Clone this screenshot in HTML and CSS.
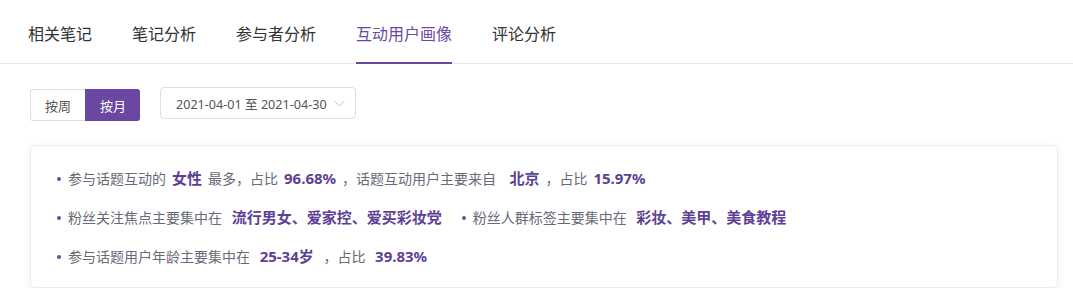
FILE: index.html
```html
<!DOCTYPE html>
<html lang="zh-CN">
<head>
  <meta charset="UTF-8">
  <title>互动用户画像</title>
  <link rel="stylesheet" href="styles.css">
</head>
<body>
<div class="tabs">
  <div class="tab">相关笔记</div>
  <div class="tab">笔记分析</div>
  <div class="tab">参与者分析</div>
  <div class="tab active">互动用户画像</div>
  <div class="tab">评论分析</div>
</div>

<div class="toolbar">
  <div class="btn-group">
    <button>按周</button>
    <button class="on">按月</button>
  </div>
  <div class="date-picker">
    <span>2021-04-01 至 2021-04-30</span>
    <svg width="11" height="7" viewBox="0 0 11 7"><path d="M0.5 0.8 L5.5 5.8 L10.5 0.8" fill="none" stroke="#c0c4cc" stroke-width="1"/></svg>
  </div>
</div>

<div class="card">
  <div class="row">
    <div class="item">参与话题互动的<span class="hl">女性</span>最多，占比<span class="hl">96.68%</span>，话题互动用户主要来自  <span class="hl">北京</span>，占比<span class="hl">15.97%</span></div>
  </div>
  <div class="row">
    <div class="item">粉丝关注焦点主要集中在 <span class="hl">流行男女、爱家控、爱买彩妆党</span></div>
    <div class="item">粉丝人群标签主要集中在 <span class="hl">彩妆、美甲、美食教程</span></div>
  </div>
  <div class="row">
    <div class="item">参与话题用户年龄主要集中在 <span class="hl">25-34岁</span> ，占比 <span class="hl">39.83%</span></div>
  </div>
</div>
</body>
</html>
```

FILE: styles.css
```css
body {
  margin: 0;
  font-family: "Noto Sans", "Noto Sans CJK SC", sans-serif;
  background: #fff;
  color: #333;
}
.tabs {
  display: flex;
  gap: 40px;
  padding-left: 28px;
  border-bottom: 1px solid #e8e8ee;
}
.tab {
  font-size: 16px;
  line-height: 24px;
  padding: 22px 0 16px;
  border-bottom: 2px solid transparent;
  margin-bottom: -1px;
  color: #333;
}
.tab.active {
  color: #6a4aa3;
  border-bottom-color: #6a47a2;
}
.toolbar {
  display: flex;
  align-items: flex-start;
  padding: 23px 0 0 30px;
}
.btn-group {
  display: flex;
  margin-top: 2px;
}
.btn-group button {
  width: 55px;
  height: 32px;
  font-family: inherit;
  font-size: 13px;
  color: #555;
  background: #fff;
  border: 1px solid #dcdfe6;
  border-right: none;
  border-radius: 3px 0 0 3px;
  padding: 0;
  cursor: pointer;
}
.btn-group button.on {
  background: #6a47a0;
  border-color: #6a47a0;
  color: #fff;
  border-radius: 0 3px 3px 0;
}
.date-picker {
  display: flex;
  align-items: center;
  justify-content: space-between;
  box-sizing: border-box;
  width: 196px;
  height: 32px;
  margin-left: 20px;
  padding: 0 10px 0 15px;
  border: 1px solid #dcdfe6;
  border-radius: 4px;
  font-size: 12.6px;
  color: #555;
}
.card {
  margin: 24px 15px 0 30px;
  padding: 12px 0 12px 26px;
  border: 1px solid #ececf2;
  border-radius: 4px;
  box-shadow: 0 2px 8px rgba(0, 0, 0, 0.06);
}
.row {
  display: flex;
  gap: 14px;
  height: 39px;
  align-items: center;
}
.item {
  display: flex;
  align-items: center;
  font-size: 14px;
  color: #686b77;
  white-space: pre;
}
.item::before {
  content: "";
  width: 4px;
  height: 4px;
  border-radius: 50%;
  background: #6a4aa3;
  margin: 2px 7px 0 0;
}
.hl {
  margin: 0 6px;
  font-size: 15px;
  font-weight: bold;
  color: #5e3f96;
}
```
